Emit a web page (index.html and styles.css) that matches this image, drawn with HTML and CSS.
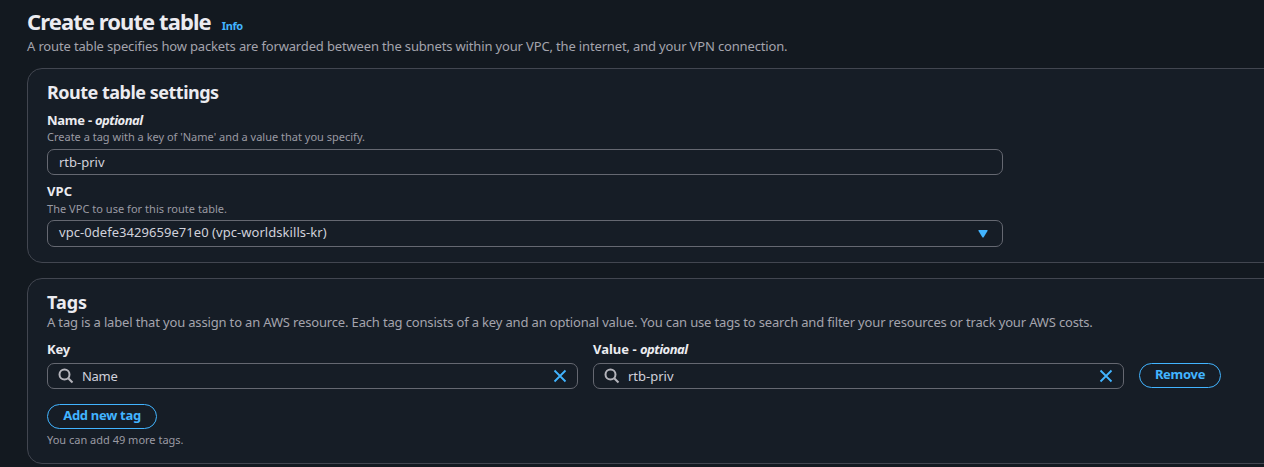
FILE: index.html
```html
<!DOCTYPE html>
<html lang="en">
<head>
<meta charset="utf-8">
<title>Create route table</title>
<link rel="stylesheet" href="styles.css">
</head>
<body>
<main class="page">
  <header class="page-header">
    <div class="title-row"><h1 class="title">Create route table</h1><a class="info">Info</a></div>
    <p class="desc page-desc">A route table specifies how packets are forwarded between the subnets within your VPC, the internet, and your VPN connection.</p>
  </header>

  <section class="card settings">
    <h2 class="card-title settings-title">Route table settings</h2>
    <div class="label name-label">Name - <em class="optional">optional</em></div>
    <div class="hint name-hint">Create a tag with a key of 'Name' and a value that you specify.</div>
    <div class="field wide name-field"><span class="value priv">rtb-priv</span></div>
    <div class="label vpc-label">VPC</div>
    <div class="hint vpc-hint">The VPC to use for this route table.</div>
    <div class="field wide select"><span class="value vpc-value">vpc-0defe3429659e71e0 (vpc-worldskills-kr)</span>
      <svg class="caret" viewBox="0 0 10 8"><path d="M.5 0h9v1L5.500 7.500h-1L.5 1z"/></svg>
    </div>
  </section>

  <section class="card tags">
    <h2 class="card-title tags-title">Tags</h2>
    <p class="desc tags-desc">A tag is a label that you assign to an AWS resource. Each tag consists of a key and an optional value. You can use tags to search and filter your resources or track your AWS costs.</p>
    <div class="tag-row">
      <div class="tag-col">
        <div class="label key-label">Key</div>
        <div class="field search">
          <svg class="glass" viewBox="0 0 16 16"><circle cx="6.5" cy="6.5" r="5"/><path d="M10.2 10.2l4.3 4.3"/></svg>
          <span class="value key-value">Name</span>
          <svg class="clear" viewBox="0 0 14 14"><path d="M1.500 1.500l11 11M12.500 1.500l-11 11"/></svg>
        </div>
      </div>
      <div class="tag-col">
        <div class="label value-label">Value - <em class="optional">optional</em></div>
        <div class="field search">
          <svg class="glass" viewBox="0 0 16 16"><circle cx="6.5" cy="6.5" r="5"/><path d="M10.2 10.2l4.3 4.3"/></svg>
          <span class="value priv">rtb-priv</span>
          <svg class="clear" viewBox="0 0 14 14"><path d="M1.500 1.500l11 11M12.500 1.500l-11 11"/></svg>
        </div>
      </div>
      <button class="button remove">Remove</button>
    </div>
    <button class="button add">Add new tag</button>
    <div class="hint more-hint">You can add 49 more tags.</div>
  </section>
</main>
</body>
</html>
```
FILE: styles.css
```css
* { box-sizing: border-box; }
body {
  margin: 0;
  height: 467px;
  overflow: hidden;
  background: #131920;
  color: #ebebf0;
  font-family: "Noto Sans", "Open Sans", sans-serif;
  font-size: 13px;
  white-space: nowrap;
}
h1, h2, p { margin: 0; }
.page { padding: 7px 0 0 27px; }
.page-header { height: 61px; }
.title-row { display: flex; align-items: baseline; gap: 11px; height: 29px; }
.title { font-size: 22px; line-height: 28px; font-weight: 700; letter-spacing: -0.92px; }
.info { color: #42b4ff; font-size: 11px; font-weight: 700; letter-spacing: -0.4px; }
.desc { color: #a4a4ad; font-size: 13px; line-height: 20px; }
.page-desc { letter-spacing: -0.153px; }
.card {
  width: 1260px;
  padding: 0 19px;
  border: 1px solid #424650;
  border-radius: 15px;
  background: #161d26;
}
.settings { height: 195px; padding-top: 11px; }
.tags { height: 186px; margin-top: 15px; padding-top: 11px; }
.card-title { font-size: 18px; line-height: 24px; font-weight: 700; letter-spacing: -0.5px; }
.tags-title { line-height: 22px; padding-top: 1px; letter-spacing: 0; }
.tags-desc { margin-top: -1px; letter-spacing: -0.16px; }
.label { font-size: 13px; line-height: 18px; font-weight: 700; letter-spacing: -0.15px; }
.name-label { margin-top: 7px; letter-spacing: -0.25px; }
.value-label { letter-spacing: 0; }
.optional { font-style: italic; letter-spacing: -0.5px; }
.hint { color: #9a9aa3; font-size: 11px; line-height: 16px; }
.vpc-hint { margin-top: 1px; letter-spacing: 0.03px; }
.field {
  display: flex;
  align-items: center;
  height: 26px;
  padding: 0 11px;
  border: 1px solid #656871;
  border-radius: 7px;
}
.wide { width: 956px; margin-top: 3px; }
.name-field { margin-top: 4px; }
.value { color: #d1d1db; line-height: 18px; }
.key-value { letter-spacing: -0.3px; }
.vpc-label { margin-top: 7px; letter-spacing: 0.1px; }
.select { height: 27px; justify-content: space-between; }
.vpc-value { padding-bottom: 3px; letter-spacing: 0.05px; }
.caret { width: 10px; height: 8px; margin-right: 3px; fill: #42b4ff; }
.tag-row { display: flex; align-items: flex-end; gap: 15px; margin-top: 8px; }
.tag-col { width: 531px; }
.tag-col .field { margin-top: 5px; }
.search { padding: 0 10.5px 0 10px; }
.glass { width: 16px; height: 16px; margin-right: 8px; fill: none; stroke: #b4b4bb; stroke-width: 2; }
.clear { width: 14px; height: 14px; margin-left: auto; fill: none; stroke: #42b4ff; stroke-width: 1.8; }
.button {
  display: block;
  height: 25px;
  padding: 0 0 4px;
  border: 1px solid #42b4ff;
  border-radius: 13px;
  background: transparent;
  color: #42b4ff;
  font: 700 13px/18px "Noto Sans", "Open Sans", sans-serif;
  letter-spacing: -0.3px;
}
.remove { width: 82px; margin-bottom: 1px; }
.add { width: 110px; margin-top: 15px; }
.more-hint { margin-top: 3px; }
```
